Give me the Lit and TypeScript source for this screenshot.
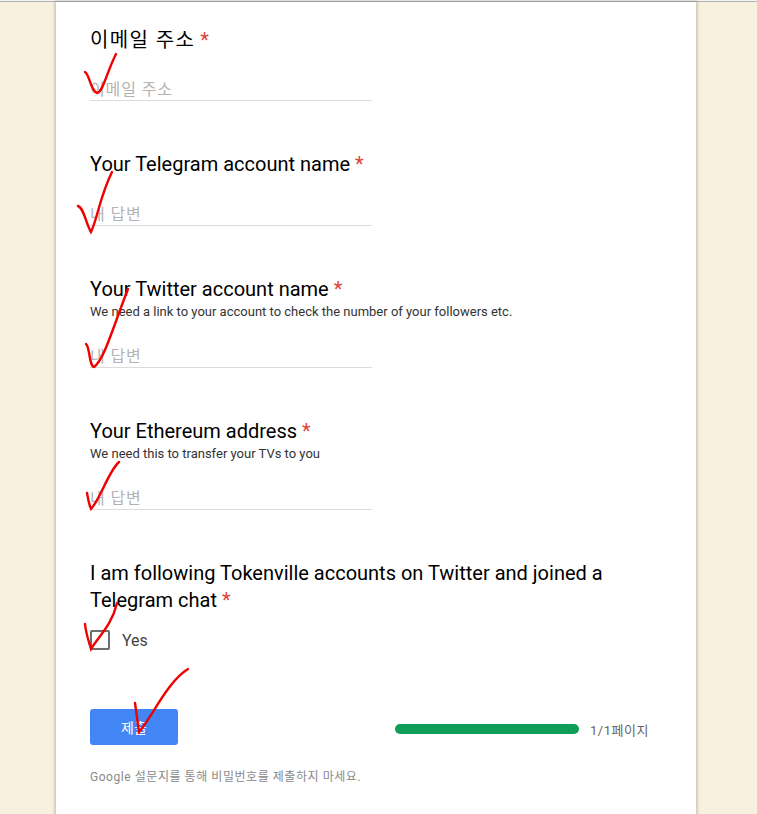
import { LitElement, html, css, svg } from 'lit';
import { customElement } from 'lit/decorators.js';

const CHECKS = [
  'M85 72 C90 75 90 90 97 93 C103 92 106 74 116 54',
  'M78 206 C84 208 86 224 91 232 C97 220 100 196 112 172',
  'M86 344 C90 347 89 366 94 367 C104 360 112 330 128 289',
  'M87 493 C88 498 89 505 91 509 C101 498 108 472 119 462',
  'M85 624 C86 634 89 642 91 649 C99 636 112 625 117 603',
  'M135 703 L139 732 C152 717 168 681 188 669',
];

@customElement('app-root')
export class AppRoot extends LitElement {
  static styles = css`
    :host {
      display: block;
      position: relative;
      width: 757px;
      height: 814px;
      overflow: hidden;
      background: #f9f1df;
      font-family: Roboto, "Noto Sans CJK KR", sans-serif;
    }
    .topline {
      height: 1px;
      border-top: 1px solid #f4f4f4;
      background: #b4b4b4;
    }
    .card {
      box-sizing: border-box;
      width: 640px;
      height: 812px;
      margin-left: 56px;
      padding: 25px 34px 0;
      background: #fff;
      box-shadow: 0 0 3px 1px rgba(90, 80, 60, 0.35);
    }
    .field {
      display: flex;
      flex-direction: column;
      margin-bottom: 50px;
    }
    .field.last {
      margin-bottom: 59px;
    }
    .title {
      font-size: 20px;
      line-height: 27px;
      color: #000;
      width: 530px;
    }
    .ko {
      letter-spacing: 1.4px;
    }
    .req {
      color: #db4437;
    }
    .help {
      font-size: 13px;
      line-height: 17px;
      color: #333;
    }
    .input {
      box-sizing: border-box;
      width: 282px;
      height: 36px;
      margin-top: 12px;
      border-bottom: 1px solid #dcdcdc;
      font-size: 16px;
      line-height: 24px;
      padding-top: 13px;
      letter-spacing: 0.9px;
      color: #b3b3b3;
    }
    .input.first {
      margin-top: 11px;
    }
    .choice {
      display: flex;
      align-items: center;
      gap: 12px;
      margin-top: 16px;
      font-size: 16px;
      color: #444;
    }
    .box {
      box-sizing: border-box;
      width: 20px;
      height: 20px;
      border: 2px solid #6e6e6e;
      border-radius: 2px;
    }
    .actions {
      display: flex;
      align-items: center;
    }
    .submit {
      width: 88px;
      height: 36px;
      border-radius: 3px;
      background: #4285f4;
      color: #fff;
      font-size: 14px;
      display: flex;
      align-items: center;
      justify-content: center;
    }
    .progress {
      display: flex;
      align-items: center;
      margin-left: 217px;
      padding-top: 4px;
      font-size: 13px;
      letter-spacing: 0.5px;
      color: #666;
    }
    .bar {
      width: 184px;
      height: 10px;
      border-radius: 5px;
      background: #0f9d58;
      margin-right: 11px;
    }
    .note {
      margin-top: 24px;
      font-size: 12px;
      line-height: 17px;
      letter-spacing: 0.55px;
      color: #8a8a8a;
    }
    .marks {
      position: absolute;
      left: 0;
      top: 0;
      pointer-events: none;
    }
    .marks path {
      fill: none;
      stroke: #f00000;
      stroke-width: 2.4;
      stroke-linecap: round;
    }
  `;

  render() {
    return html`
      <div class="topline"></div>
      <div class="card">
        <div class="field">
          <div class="title"><span class="ko">이메일 주소</span> <span class="req">*</span></div>
          <div class="input first">이메일 주소</div>
        </div>
        <div class="field">
          <div class="title">Your Telegram account name <span class="req">*</span></div>
          <div class="input">내 답변</div>
        </div>
        <div class="field">
          <div class="title">Your Twitter account name <span class="req">*</span></div>
          <div class="help">We need a link to your account to check the number of your followers etc.</div>
          <div class="input">내 답변</div>
        </div>
        <div class="field">
          <div class="title">Your Ethereum address <span class="req">*</span></div>
          <div class="help">We need this to transfer your TVs to you</div>
          <div class="input">내 답변</div>
        </div>
        <div class="field last">
          <div class="title">I am following Tokenville accounts on Twitter and joined a Telegram chat <span class="req">*</span></div>
          <div class="choice"><div class="box"></div><span>Yes</span></div>
        </div>
        <div class="actions">
          <div class="submit">제출</div>
          <div class="progress"><div class="bar"></div><span>1/1페이지</span></div>
        </div>
        <div class="note">Google 설문지를 통해 비밀번호를 제출하지 마세요.</div>
      </div>
      <svg class="marks" width="757" height="814" viewBox="0 0 757 814">
        ${CHECKS.map((d) => svg`<path d=${d}></path>`)}
      </svg>
    `;
  }
}
